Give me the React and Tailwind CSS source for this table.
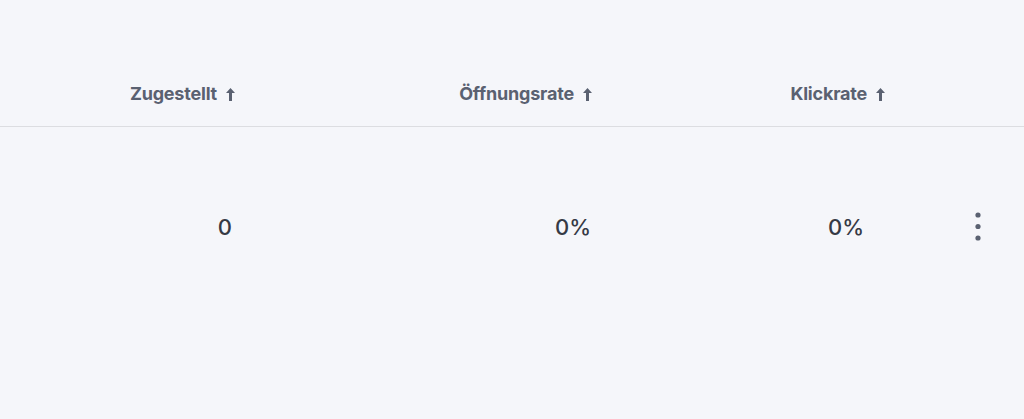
import React from "react";

function SortArrow() {
  return (
    <svg width="9" height="13" viewBox="0 0 9 13" className="ml-[9px]">
      <path d="M4.5 0 L9 5 L6 5 L6 13 L3 13 L3 5 L0 5 Z" fill="#5a6171" />
    </svg>
  );
}

function MoreDots() {
  return (
    <svg width="6" height="30" viewBox="0 0 6 30">
      <circle cx="3" cy="3" r="2.6" fill="#5a6171" />
      <circle cx="3" cy="14.5" r="2.6" fill="#5a6171" />
      <circle cx="3" cy="26" r="2.6" fill="#5a6171" />
    </svg>
  );
}

const columns = [
  { label: "Zugestellt", value: "0", pad: "pr-[5px]" },
  { label: "Öffnungsrate", value: "0%", pad: "pr-[3px]" },
  { label: "Klickrate", value: "0%", pad: "pr-[23px]" },
];

export default function App() {
  return (
    <div
      className="h-[419px] w-full bg-[#f5f6fa] overflow-hidden"
      style={{ fontFamily: "Inter, Roboto, sans-serif" }}
    >
      {/* header */}
      <div className="grid grid-cols-[237px_357px_293px_1fr] h-[127px] border-b border-[#dcdde1] pt-[81px]">
        {columns.map((c) => (
          <div key={c.label} className="flex items-center justify-end pr-[2px] h-[26px]">
            <span className="text-[18px] font-bold text-[#5a6171] leading-[26px] tracking-[-0.2px]">
              {c.label}
            </span>
            <SortArrow />
          </div>
        ))}
        <div />
      </div>

      {/* row */}
      <div className="grid grid-cols-[237px_357px_293px_1fr] pt-[85px]">
        {columns.map((c) => (
          <div
            key={c.label}
            className={`flex items-center justify-end h-[30px] ${c.pad}`}
          >
            <span className="text-[22px] font-medium text-[#363a45] leading-[30px]">
              {c.value}
            </span>
          </div>
        ))}
        <div className="flex justify-end items-center pr-[43px] h-[30px]">
          <MoreDots />
        </div>
      </div>
    </div>
  );
}
